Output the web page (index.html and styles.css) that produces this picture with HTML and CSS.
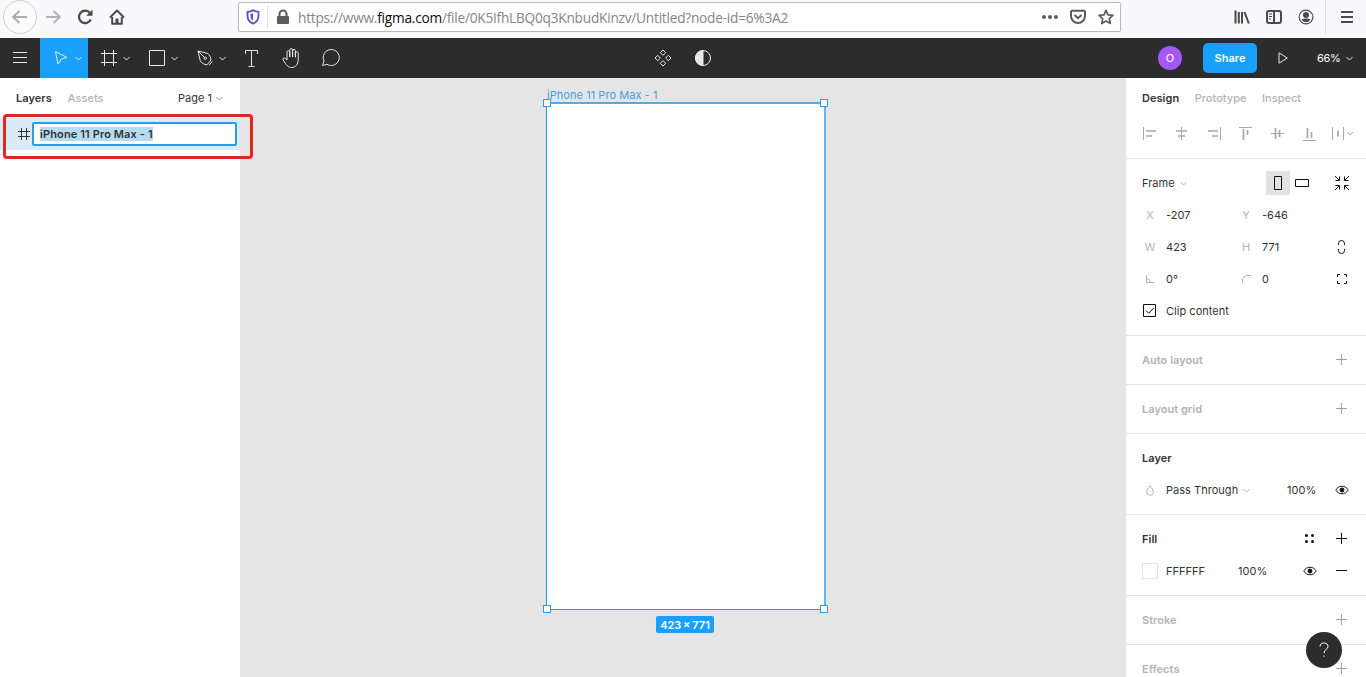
FILE: index.html
```html
<!DOCTYPE html>
<html lang="en">
<head>
<meta charset="utf-8">
<title>Untitled – Figma</title>
<link rel="stylesheet" href="styles.css">
</head>
<body>
<header class="browser">
  <div class="nav">
    <span class="back"><svg width="18" height="16" viewBox="0 0 18 16"><path d="M16 8H2M8.500 2L2 8l6.500 6" class="s2"/></svg></span>
    <span class="slot dim"><svg width="18" height="16" viewBox="0 0 18 16"><path d="M2 8h14M9.500 2L16 8l-6.500 6" class="s2"/></svg></span>
    <span class="slot"><svg width="16" height="16" viewBox="0 0 16 16"><path d="M13.800 10.500A6.200 6.200 0 1 1 12.500 3.500" class="s23"/><path d="M15.500.5v6.300H9.200z" class="f"/></svg></span>
    <span class="slot"><svg width="16" height="16" viewBox="0 0 16 16"><path d="M1 8.500L8 1.500l7 7M3.200 8v6.800h9.600V8" class="s2"/><path d="M6.500 14.500v-5h3v5z" class="f"/></svg></span>
  </div>
  <div class="url">
    <span class="shield"><svg width="14" height="16" viewBox="0 0 14 16"><path d="M7 1.300C5.500 2.300 3.300 2.700 1.500 2.800v4C1.500 10.500 3.500 13.200 7 14.700c3.500-1.500 5.500-4.200 5.500-7.900v-4C10.700 2.700 8.500 2.300 7 1.300z"/><path d="M7 4.300c-.8.400-1.500.600-2.500.700v2c0 2 .8 3.600 2.500 4.700z" class="in"/></svg></span>
    <span class="lock"><svg width="14" height="16" viewBox="0 0 14 16"><path d="M3.500 8V5a3.500 3.500 0 0 1 7 0v3" class="s2"/><rect x="1" y="7" width="12" height="8" rx="1" class="f"/></svg></span>
    <span class="address">https://www.<b>figma.com</b>/file/0K5IfhLBQ0q3KnbudKinzv/Untitled?node-id=6%3A2</span>
    <span class="urlicons">
      <svg width="16" height="16" viewBox="0 0 16 16"><g class="f"><circle cx="2" cy="8" r="2"/><circle cx="8" cy="8" r="2"/><circle cx="14" cy="8" r="2"/></g></svg>
      <svg width="16" height="16" viewBox="0 0 16 16"><path d="M2 1.800h12a1 1 0 0 1 1 1V7A7 7 0 0 1 1 7V2.800a1 1 0 0 1 1-1zM4.500 6L8 9.300 11.500 6" class="s2"/></svg>
      <svg width="16" height="16" viewBox="0 0 16 16"><path d="M8 1.300l2 4.500 5 .5-3.700 3.300 1 4.900L8 12l-4.300 2.500 1-4.900L1 6.300l5-.5z" class="s17"/></svg>
    </span>
  </div>
  <div class="tools">
    <span class="slot"><svg width="16" height="16" viewBox="0 0 16 16"><path d="M1.500 1.500v13M4.800 3v11.500M8 3v11.500M10.500 3l4.300 11.500" class="s2"/></svg></span>
    <span class="slot"><svg width="16" height="16" viewBox="0 0 16 16"><rect x="1" y="2" width="14" height="12" rx="2" class="s2"/><path d="M8 2v12" class="s2"/><path d="M3 5h3M3 7.500h3M3 10h2" class="s1"/></svg></span>
    <span class="slot"><svg width="16" height="16" viewBox="0 0 16 16"><circle cx="8" cy="8" r="6.900" class="s1"/><circle cx="8" cy="6" r="3" class="f"/><path d="M3.600 10.300c2.200-1 6.600-1 8.800 0-.8 1.800-2.500 3-4.400 3s-3.600-1.200-4.400-3z" class="f"/></svg></span>
    <span class="appmenu"><svg width="14" height="14" viewBox="0 0 14 14"><path d="M1 2h12M1 7h12M1 12h12" class="s2"/></svg></span>
  </div>
</header>

<nav class="toolbar">
  <span class="tool"><svg width="14" height="12" viewBox="0 0 14 12"><path d="M0 .5h14M0 5.500h14M0 10.500h14"/></svg></span>
  <span class="tool wide active"><svg width="16" height="16" viewBox="0 0 16 16"><path d="M2.500 1.500l11.500 6-5.500 1.500-3.500 5z"/></svg><svg class="chev" width="7" height="5" viewBox="0 0 7 5"><path d="M.5 1l3 3 3-3"/></svg></span>
  <span class="tool wide"><svg width="16" height="16" viewBox="0 0 16 16"><path d="M3.500 0v16M12.500 0v16M0 3.500h16M0 12.500h16"/></svg><svg class="chev" width="7" height="5" viewBox="0 0 7 5"><path d="M.5 1l3 3 3-3"/></svg></span>
  <span class="tool wide"><svg width="16" height="16" viewBox="0 0 16 16"><path d="M.5.5h15v15H.5z"/></svg><svg class="chev" width="7" height="5" viewBox="0 0 7 5"><path d="M.5 1l3 3 3-3"/></svg></span>
  <span class="tool wide"><svg width="16" height="16" viewBox="0 0 16 16"><path d="M1 1l9.300 2.300c2 1.200 3.500 3.700 3.700 6.700L10 14.800C6.800 14.500 4.500 13 3.200 10.500zM1 1l6.500 6.500M12 15.200l3.300-3.700"/><circle cx="8.300" cy="8.200" r="1.200"/></svg><svg class="chev" width="7" height="5" viewBox="0 0 7 5"><path d="M.5 1l3 3 3-3"/></svg></span>
  <span class="tool narrow"><svg width="14" height="17" viewBox="0 0 14 17"><path d="M.5 4V.500h12V4M6.500 .5v16M3.500 16.500h6"/></svg></span>
  <span class="tool"><svg width="18" height="20" viewBox="0 0 18 20"><path d="M5 12V4.200a1.400 1.400 0 0 1 2.800 0V9M7.800 9V2a1.400 1.400 0 0 1 2.800 0v7M10.600 9V2.800a1.400 1.400 0 0 1 2.800 0V9.500M13.400 9V5.200a1.400 1.400 0 0 1 2.800 0V12c0 4-2.500 7.500-6.500 7.500-3.700 0-5.200-2.200-8.500-7.500-.8-1.500.7-2.800 2.200-1.600L5 12"/></svg></span>
  <span class="tool"><svg width="18" height="18" viewBox="0 0 18 18"><path d="M.5 16.500l1.500-4.600A8 8 0 1 1 5 15.300z"/></svg></span>
  <span class="center">
    <svg width="18" height="18" viewBox="0 0 18 18"><path d="M9 1l2.700 2.700L9 6.400 6.300 3.700zM9 11.600l2.700 2.700L9 17l-2.700-2.700zM3.700 6.300L6.400 9l-2.700 2.700L1 9zM14.300 6.300L17 9l-2.700 2.700L11.600 9z"/></svg>
    <svg width="18" height="18" viewBox="0 0 18 18"><circle cx="9" cy="9" r="7.500"/><path d="M9 1.500a7.500 7.500 0 0 0 0 15z" class="light"/></svg>
  </span>
  <span class="avatar">O</span>
  <span class="share">Share</span>
  <span class="play"><svg width="10" height="12" viewBox="0 0 10 12"><path d="M1 .8L9.300 6 1 11.200z"/></svg></span>
  <span class="zoom">66%<svg width="7" height="5" viewBox="0 0 7 5"><path d="M.5 1l3 3 3-3"/></svg></span>
</nav>

<main class="work">
  <aside class="layers">
    <div class="ltabs"><b>Layers</b><span class="muted">Assets</span><span class="page">Page 1<svg width="7" height="5" viewBox="0 0 7 5"><path d="M.5 1l3 3 3-3"/></svg></span></div>
    <div class="layer">
      <svg width="12" height="12" viewBox="0 0 12 12"><path d="M3.500 0v12M8.500 0v12M0 3.500h12M0 8.500h12"/></svg>
      <div class="rename"><span>iPhone 11 Pro Max - 1</span></div>
    </div>
  </aside>

  <section class="canvas">
    <div class="ftitle">iPhone 11 Pro Max - 1</div>
    <div class="frame"><i class="h tl"></i><i class="h tr"></i><i class="h bl"></i><i class="h br"></i></div>
    <div class="size">423 × 771</div>
  </section>

  <aside class="props">
    <section>
      <div class="ptabs"><b>Design</b><span>Prototype</span><span>Inspect</span></div>
      <div class="aligns">
        <svg width="16" height="14" viewBox="0 0 16 14"><path d="M1.500 0v13"/><path d="M4 4h10M4 9h6" class="t"/></svg>
        <svg width="16" height="14" viewBox="0 0 16 14"><path d="M7.500 0v13"/><path d="M2 4h11M4 9h7" class="t"/></svg>
        <svg width="16" height="14" viewBox="0 0 16 14"><path d="M14.500 0v13"/><path d="M2 4h10M6 9h6" class="t"/></svg>
        <svg width="16" height="14" viewBox="0 0 16 14"><path d="M1 .5h13"/><path d="M5.500 2v11M9.500 3v5" class="t"/></svg>
        <svg width="16" height="14" viewBox="0 0 16 14"><path d="M1 6.500h13"/><path d="M5.500 1v11M9.500 3v7" class="t"/></svg>
        <svg width="16" height="14" viewBox="0 0 16 14"><path d="M1 13.500h13"/><path d="M5.500 1v10M9.500 5v6" class="t"/></svg>
        <svg class="spread" width="24" height="14" viewBox="0 0 24 14"><path d="M1.500 0v13M12.500 0v13M16.500 5l2.500 3 3-3"/><path d="M7 3.500v6" class="t"/></svg>
      </div>
    </section>
    <section>
      <div class="row frame-row"><span class="pick">Frame<svg width="7" height="5" viewBox="0 0 7 5"><path d="M.5 1l3 3 3-3"/></svg></span>
        <span class="orient on"><svg width="8" height="14" viewBox="0 0 8 14"><path d="M.5.5h7v13h-7z"/></svg></span>
        <span class="orient"><svg width="14" height="8" viewBox="0 0 14 8"><path d="M.5.5h13v7H.5z"/></svg></span>
        <span class="end"><svg width="16" height="16" viewBox="0 0 16 16"><path d="M1 1l4.500 4.500M1.500 5.500h4v-4M15 1l-4.500 4.500M10.500 1.500v4h4M1 15l4.500-4.500M1.500 10.500h4v4M15 15l-4.500-4.500M10.500 14.500v-4h4"/></svg></span></div>
      <div class="row grid"><i>X</i><span>-207</span><i>Y</i><span>-646</span></div>
      <div class="row grid"><i>W</i><span>423</span><i>H</i><span>771</span><span class="end"><svg width="8" height="14" viewBox="0 0 8 14"><path d="M.5 5V3.500a3 3 0 0 1 6 0V5M.5 9v1.500a3 3 0 0 0 6 0V9"/></svg></span></div>
      <div class="row grid"><i><svg width="8" height="8" viewBox="0 0 8 8"><path d="M.5 0v7.500H8M.5 3.500a4 4 0 0 1 4 4"/></svg></i><span>0°</span><i><svg width="8" height="8" viewBox="0 0 8 8"><path d="M.5 8V5.500a5 5 0 0 1 5-5H9"/></svg></i><span>0</span><span class="end"><svg width="10" height="10" viewBox="0 0 10 10"><path d="M.5 3V.500H3M7 .5h2.500V3M9.500 7v2.500H7M3 9.500H.5V7"/></svg></span></div>
      <div class="row grid"><em><svg width="14" height="14" viewBox="0 0 14 14"><path d="M1.500.5h12v12h-12zM4 6.500l2.700 2.700L11.800 4"/></svg></em><span class="wide-label">Clip content</span></div>
    </section>
    <section><div class="row off"><b>Auto layout</b><span class="end"><svg width="12" height="12" viewBox="0 0 12 12"><path d="M5.500 0v11M0 5.500h11"/></svg></span></div></section>
    <section><div class="row off"><b>Layout grid</b><span class="end"><svg width="12" height="12" viewBox="0 0 12 12"><path d="M5.500 0v11M0 5.500h11"/></svg></span></div></section>
    <section>
      <div class="row"><b>Layer</b></div>
      <div class="row blend"><i><svg width="8" height="11" viewBox="0 0 8 11"><path d="M4 .7C2.500 3 .7 4.700.7 7a3.300 3.300 0 0 0 6.600 0C7.300 4.700 5.500 3 4 .7z"/></svg></i><span class="pick">Pass Through<svg width="7" height="5" viewBox="0 0 7 5"><path d="M.5 1l3 3 3-3"/></svg></span><span>100%</span><span class="end"><svg width="14" height="10" viewBox="0 0 14 10"><path d="M.8 5C3.500 0 10.500 0 13.200 5 10.500 10 3.500 10 .8 5z"/><circle cx="7" cy="5" r="2" class="dot"/></svg></span></div>
    </section>
    <section>
      <div class="row"><b class="grow">Fill</b><span class="end"><svg width="10" height="10" viewBox="0 0 10 10"><g class="dots"><circle cx="1.500" cy="1.500" r="1.500"/><circle cx="7.500" cy="1.500" r="1.500"/><circle cx="1.500" cy="7.500" r="1.500"/><circle cx="7.500" cy="7.500" r="1.500"/></g></svg></span><span class="end near"><svg width="12" height="12" viewBox="0 0 12 12"><path d="M5.500 0v11M0 5.500h11"/></svg></span></div>
      <div class="row fill"><i class="swatch"></i><span>FFFFFF</span><span>100%</span><span class="end"><svg width="14" height="10" viewBox="0 0 14 10"><path d="M.8 5C3.500 0 10.500 0 13.200 5 10.500 10 3.500 10 .8 5z"/><circle cx="7" cy="5" r="2" class="dot"/></svg></span><span class="end"><svg width="12" height="12" viewBox="0 0 12 12"><path d="M0 5.500h11"/></svg></span></div>
    </section>
    <section><div class="row off"><b>Stroke</b><span class="end"><svg width="12" height="12" viewBox="0 0 12 12"><path d="M5.500 0v11M0 5.500h11"/></svg></span></div></section>
    <section><div class="row off"><b>Effects</b><span class="end"><svg width="12" height="12" viewBox="0 0 12 12"><path d="M5.500 0v11M0 5.500h11"/></svg></span></div></section>
  </aside>
</main>

<div class="highlight"></div>
<div class="help"><svg width="12" height="16" viewBox="0 0 12 16"><path d="M2 4.500C2 2.200 3.700 1 6 1s4 1.300 4 3.500C10 7.500 6 7.500 6 11M6 13.500v1.300"/></svg></div>
</body>
</html>
```
FILE: styles.css
```css
* { box-sizing: border-box; }
body {
  margin: 0;
  width: 1366px;
  height: 677px;
  overflow: hidden;
  position: relative;
  font: 11px/16px Inter, "Liberation Sans", sans-serif;
  letter-spacing: 0.03px;
  color: #333;
  background: #fff;
}
svg { display: block; flex: none; fill: none; stroke: currentColor; stroke-width: 1; overflow: visible; }
b { font-weight: 600; }
i, em { font-style: normal; }

/* Browser chrome */
.browser { display: flex; height: 38px; background: #f9f9fb; color: #4a4a4f; }
.browser .s2 { stroke-width: 2; stroke-linejoin: round; }
.browser .s23 { stroke-width: 2.3; }
.browser .s17 { stroke-width: 1.7; stroke-linejoin: round; }
.browser .s1 { stroke-width: 1.1; }
.browser .f { fill: currentColor; stroke: none; }
.nav { display: flex; width: 238px; height: 34px; padding-left: 3px; align-items: center; }
.back { display: grid; place-items: center; width: 34px; height: 34px; border: 1px solid #d0d0d2; border-radius: 50%; color: #acacae; background: #fbfbfc; }
.slot { display: grid; place-items: center; width: 32px; height: 34px; }
.dim { color: #b4b4b6; }
.url { display: flex; align-items: center; width: 883px; height: 30px; margin-top: 2px; border: 1px solid #b9b9bc; border-radius: 2px; background: #fff; color: #5b5b60; }
.shield { display: grid; place-items: center; width: 29px; height: 22px; border-right: 1px solid #dcdcdf; color: #5650c4; }
.shield svg { stroke-width: 1.8; }
.shield .in { fill: currentColor; stroke: none; }
.lock { display: grid; place-items: center; width: 29px; }
.address { flex: 1; padding: 1px 0 0 1px; font: 13.7px/20px "Open Sans", "Noto Sans", sans-serif; letter-spacing: -0.24px; color: #85858a; white-space: nowrap; }
.address b { font-weight: 400; color: #0c0c0d; }
.urlicons { display: flex; gap: 12px; padding-right: 6px; }
.nav, .url, .tools { flex: none; }
.tools { display: flex; margin-left: 105px; }
.appmenu { display: grid; place-items: center; width: 42px; height: 34px; margin-left: 3px; border-left: 1px solid #dedee1; }

/* Editor toolbar */
.toolbar { display: flex; align-items: center; height: 40px; background: #2c2c2c; color: #fff; stroke-linejoin: round; }
.toolbar svg { color: #e8e8e8; }
.toolbar .light { fill: currentColor; }
.tool { display: grid; place-items: center; width: 40px; height: 40px; }
.tool.wide { display: flex; width: 48px; padding-left: 13px; gap: 6px; }
.tool.narrow { width: 39px; }
.tool.active { background: #18a0fb; }
.center { display: flex; gap: 22px; margin-left: 303px; }
.avatar { display: grid; place-items: center; width: 24px; height: 24px; margin-left: 446px; border-radius: 50%; background: #a259f7; }
.share { display: grid; place-items: center; width: 54px; height: 30px; margin-left: 21px; border-radius: 5px; background: #18a0fb; font-weight: 600; }
.play { margin-left: 21px; }
.zoom { display: flex; align-items: center; gap: 5px; margin-left: 29px; letter-spacing: -0.3px; }

/* Panels and canvas */
.work { display: flex; height: 599px; }
.layers { width: 240px; background: #fff; }
.ltabs { display: flex; height: 40px; padding: 0 17px 0 16px; align-items: center; gap: 16px; }
.muted { color: #b3b3b3; font-weight: 500; }
.page { display: flex; align-items: center; gap: 4px; margin-left: auto; }
.page svg { color: #999; }
.layer { display: flex; align-items: center; height: 32px; padding: 0 3px 0 18px; gap: 2px; background: #daebf7; }
.rename { flex: 1; height: 24px; padding: 2px 6px; border: 2px solid #2f9be0; border-radius: 2px; background: #fff; line-height: 16px; font-weight: 600; letter-spacing: 0.12px; }
.rename span { display: inline-block; height: 14px; line-height: 14px; background: #b5dbf5; }
.canvas { position: relative; width: 886px; background: #e5e5e5; }
.ftitle { position: absolute; left: 307px; top: 9px; color: #3f9fe0; letter-spacing: 0.05px; }
.frame { position: absolute; left: 306px; top: 24px; width: 280px; height: 508px; border: 1px solid #2b9bea; border-right-width: 2px; border-top-width: 2px; border-right-color: #62b4ee; border-top-color: #4fabec; background: #fff; }
.h { position: absolute; width: 8px; height: 8px; border: 1px solid #2b9bea; background: #fff; }
.tl { left: -4px; top: -5px; }
.tr { right: -4px; top: -5px; }
.bl { left: -4px; bottom: -4px; }
.br { right: -4px; bottom: -4px; }
.size { position: absolute; left: 416px; top: 538px; width: 58px; height: 17px; border-radius: 2px; background: #18a0fb; color: #fff; font-weight: 600; letter-spacing: 0; word-spacing: -1px; text-align: center; line-height: 18px; }

/* Properties panel */
.props { width: 240px; background: #fff; }
.props section { padding: 8px 0; border-bottom: 1px solid #e5e5e5; }
.props section:first-child { padding-top: 0; }
.ptabs { display: flex; align-items: center; height: 40px; padding-left: 16px; gap: 15.500px; color: #b3b3b3; font-weight: 500; }
.ptabs b { color: #333; }
.aligns { display: flex; align-items: center; height: 32px; padding-left: 16px; gap: 16px; color: #a8a8a8; }
.aligns .t { stroke-width: 1.7; }
.aligns .spread { margin-left: -3px; }
.row { display: flex; align-items: center; height: 32px; padding: 0 8px 0 16px; }
.row > b { flex: 1; }
.row svg { color: #111; }
.row i, .row i svg { color: #b3b3b3; }
.row i { display: grid; place-items: center; width: 16px; }
.end { display: grid; place-items: center; width: 32px; height: 32px; }
.off, .off svg { color: #b3b3b3; }
.row.off svg { color: #a0a0a0; }
.row .dot { fill: currentColor; }
.row .dots { fill: currentColor; stroke: none; }
.pick { display: flex; align-items: center; gap: 5px; }
.row .pick svg { color: #b3b3b3; }
.frame-row .pick { width: 124px; }
.orient { display: grid; place-items: center; width: 24px; height: 24px; }
.orient.on { background: #e2e2e2; }
.frame-row .end { margin-left: 12px; }
.grid { display: grid; grid-template-columns: 24px 72px 24px 64px 32px; }
.wide-label { grid-column: span 3; }
.blend { display: grid; grid-template-columns: 24px 121px 39px 32px; }
.fill { display: grid; grid-template-columns: 24px 72px 56px 32px 32px; }
.row .swatch { width: 16px; height: 16px; border: 1px solid #dfe5e8; }

/* Overlays */
.highlight { position: absolute; left: 3px; top: 114px; width: 250px; height: 45px; border: 3px solid #e0281b; border-radius: 4px; }
.help { position: absolute; left: 1306px; top: 632px; display: grid; place-items: center; width: 36px; height: 36px; border-radius: 50%; background: #2c2c2c; color: #fff; }
```
